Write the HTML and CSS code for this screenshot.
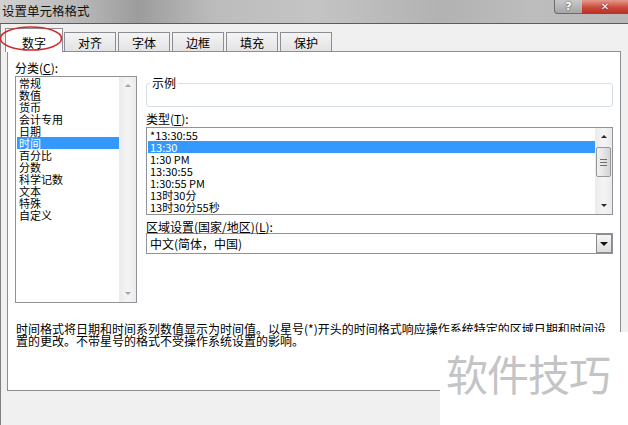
FILE: index.html
```html
<!DOCTYPE html>
<html lang="zh-CN">
  <head>
    <meta charset="UTF-8" />
    <title>设置单元格格式</title>
    <link rel="stylesheet" href="styles.css">
  </head>
  <body>
    <div class="window">
      <div class="titlebar">
        <span class="title">设置单元格格式</span>
        <div class="caption-buttons">
          <span class="cap-btn help">?</span>
          <span class="cap-btn close">✕</span>
        </div>
      </div>

      <div class="dialog">
        <div class="tabs">
          <div class="tab active">数字</div>
          <div class="tab first">对齐</div>
          <div class="tab">字体</div>
          <div class="tab">边框</div>
          <div class="tab">填充</div>
          <div class="tab">保护</div>
        </div>

        <div class="panel">
          <div class="panel-main">
            <div class="category">
              <div class="field-label">分类(<u>C</u>):</div>
              <div class="listbox category-list">
                <ul class="items">
                  <li>常规</li>
                  <li>数值</li>
                  <li>货币</li>
                  <li>会计专用</li>
                  <li>日期</li>
                  <li class="selected">时间</li>
                  <li>百分比</li>
                  <li>分数</li>
                  <li>科学记数</li>
                  <li>文本</li>
                  <li>特殊</li>
                  <li>自定义</li>
                </ul>
                <div class="vscroll disabled">
                  <span class="arrow up"></span>
                  <span class="track"></span>
                  <span class="arrow down"></span>
                </div>
              </div>
            </div>

            <div class="details">
              <fieldset class="sample">
                <legend>示例</legend>
                <div class="sample-body"></div>
              </fieldset>

              <div class="field-label type-label">类型(<u>T</u>):</div>
              <div class="listbox type-list">
                <ul class="items">
                  <li>*13:30:55</li>
                  <li class="selected">13:30</li>
                  <li>1:30 PM</li>
                  <li>13:30:55</li>
                  <li>1:30:55 PM</li>
                  <li>13时30分</li>
                  <li>13时30分55秒</li>
                </ul>
                <div class="vscroll">
                  <span class="arrow up"></span>
                  <span class="track"><span class="thumb"><i></i><i></i><i></i></span></span>
                  <span class="arrow down"></span>
                </div>
              </div>

              <div class="field-label locale-label">区域设置(国家/地区)(<u>L</u>):</div>
              <div class="combo">
                <span class="combo-text">中文(简体，中国)</span>
                <span class="combo-btn"></span>
              </div>
            </div>
          </div>

          <p class="desc">时间格式将日期和时间系列数值显示为时间值。以星号(*)开头的时间格式响应操作系统特定的区域日期和时间设<br>置的更改。不带星号的格式不受操作系统设置的影响。</p>
        </div>
      </div>

      <svg class="ring" width="66" height="28" viewBox="0 0 66 28">
        <ellipse cx="32" cy="13.5" rx="30.5" ry="11.5" fill="none" stroke="#d42a2a" stroke-width="1.6" />
      </svg>

      <div class="watermark">软件技巧</div>
    </div>
  </body>
</html>
```

FILE: styles.css
```css
body {
  margin: 0;
  width: 628px;
  height: 425px;
  overflow: hidden;
  background-color: #f0f0f0;
  color: #000;
  font-family: "Noto Sans CJK SC", "Liberation Sans", sans-serif;
  font-size: 12px;
  line-height: 12px;
}

.window {
  position: relative;
  height: 425px;
}

/* title bar */
.titlebar {
  height: 23px;
  border-bottom: 1px solid #5c5c5c;
  display: flex;
  justify-content: space-between;
  align-items: flex-start;
  background: linear-gradient(to right, #d2d2d2 0%, #b4b4b4 14%, #9c9c9c 22%, #bcbcbc 34%, #c4c4c4 50%, #b2b2b2 70%, #bdbdbd 85%, #b8b8b8 100%);
}

.title {
  padding: 4px 0 0 2px;
  font-size: 12.5px;
  line-height: 14px;
  color: #111;
}

.caption-buttons {
  display: flex;
}

.cap-btn {
  height: 14px;
  display: flex;
  align-items: center;
  justify-content: center;
  font-family: "DejaVu Sans", sans-serif;
  font-weight: bold;
  color: #fff;
  box-sizing: border-box;
}

.cap-btn.help {
  width: 28px;
  font-size: 11px;
  border: 1px solid #6b6b6b;
  border-top: none;
  border-right: none;
  border-bottom-left-radius: 4px;
  background: linear-gradient(#c9c9c9, #a6a6a6);
  text-shadow: 0 0 2px #333;
}

.cap-btn.close {
  width: 46px;
  font-size: 10px;
  background: linear-gradient(#e49a8c, #c9483a 55%, #b83020);
  text-shadow: 0 0 2px #611;
}

/* dialog body */
.dialog {
  border-left: 1px solid #808080;
  height: 401px;
}

.tabs {
  position: relative;
  z-index: 1;
  height: 27px;
  display: flex;
  align-items: flex-end;
  padding-left: 4px;
}

.tab {
  width: 52px;
  height: 19px;
  margin-left: 2px;
  box-sizing: border-box;
  border: 1px solid #8c8e94;
  border-bottom: none;
  background: linear-gradient(#f4f4f4, #e3e3e3);
  text-align: center;
  padding-top: 4px;
}

.tab.first {
  margin-left: 1px;
}

.tab.active {
  width: 58px;
  height: 24px;
  margin-left: 0;
  margin-bottom: -1px;
  background: #fff;
  padding-top: 8px;
}

.panel {
  margin-left: 6px;
  width: 614px;
  height: 340px;
  box-sizing: border-box;
  border: 1px solid #8c8e94;
  background: #fff;
}

.panel-main {
  display: flex;
  align-items: flex-start;
  gap: 9px;
  padding-left: 7px;
}

.field-label u {
  text-decoration: underline;
}

/* category column */
.category {
  width: 122px;
  padding-top: 10px;
}

.listbox {
  display: flex;
  box-sizing: border-box;
  border: 1px solid #8f9296;
  background: #fff;
}

.category-list {
  margin-top: 2px;
  height: 227px;
}

.items {
  list-style: none;
  margin: 0;
  padding: 0 0 0 1px;
  flex: 1;
  font-size: 11px;
}

.items li {
  height: 12px;
  line-height: 12px;
  padding-left: 2px;
  white-space: nowrap;
}

.items li.selected {
  background: #3399ff;
  color: #fff;
}

/* scrollbars */
.vscroll {
  width: 17px;
  display: flex;
  flex-direction: column;
  align-items: center;
  background: linear-gradient(to right, #ebebeb, #f4f4f4 50%, #ebebeb);
}

.vscroll .arrow {
  height: 17px;
  width: 17px;
  display: flex;
  align-items: center;
  justify-content: center;
}

.vscroll .arrow::before {
  content: "";
  border-left: 3px solid transparent;
  border-right: 3px solid transparent;
}

.vscroll .arrow.up::before {
  border-bottom: 3px solid #2b2b2b;
}

.vscroll .arrow.down::before {
  border-top: 3px solid #2b2b2b;
}

.vscroll.disabled .arrow.up::before {
  border-bottom-color: #a3a3a3;
}

.vscroll.disabled .arrow.down::before {
  border-top-color: #a3a3a3;
}

.vscroll .track {
  flex: 1;
  width: 17px;
  display: flex;
  justify-content: center;
}

.thumb {
  width: 15px;
  height: 30px;
  margin-top: 2px;
  box-sizing: border-box;
  border: 1px solid #979797;
  border-radius: 2px;
  background: linear-gradient(to right, #f2f2f2, #e4e4e4 50%, #d4d4d4);
  display: flex;
  flex-direction: column;
  align-items: center;
  justify-content: center;
  gap: 2px;
}

.thumb i {
  width: 7px;
  height: 1px;
  background: #6f6f6f;
}

/* right column */
.details {
  width: 467px;
}

.sample {
  margin: 25px 0 0 0;
  padding: 0 4px;
  border: 1px solid #d5dfe5;
  border-radius: 3px;
}

.sample legend {
  padding: 0 2px;
  margin-left: -1px;
  line-height: 12px;
}

.sample-body {
  height: 17px;
}

.type-label {
  margin-top: 6px;
}

.type-list {
  margin-top: 2px;
  height: 88px;
}

.type-list .items {
  padding-top: 1px;
}

.locale-label {
  margin-top: 6px;
}

.combo {
  height: 21px;
  box-sizing: border-box;
  border: 1px solid #8f9296;
  display: flex;
  align-items: center;
  justify-content: space-between;
  padding: 0 0 0 3px;
}

.combo-btn {
  width: 16px;
  height: 19px;
  box-sizing: border-box;
  border: 1px solid #8a8a8a;
  background: linear-gradient(#f6f6f6, #dcdcdc);
  display: flex;
  align-items: center;
  justify-content: center;
}

.combo-btn::before {
  content: "";
  border-left: 4px solid transparent;
  border-right: 4px solid transparent;
  border-top: 4px solid #111;
}

.desc {
  margin: 20px 0 0 0;
  padding-left: 8px;
  white-space: nowrap;
}

/* overlays */
.ring {
  position: absolute;
  z-index: 2;
  left: -1px;
  top: 25px;
}

.watermark {
  position: absolute;
  z-index: 2;
  left: 440px;
  top: 332px;
  right: 0;
  bottom: 0;
  background: #fff;
  color: #c4c4c4;
  font-size: 42px;
  line-height: 42px;
  padding: 20px 0 0 6px;
  letter-spacing: -1px;
  white-space: nowrap;
}
```
